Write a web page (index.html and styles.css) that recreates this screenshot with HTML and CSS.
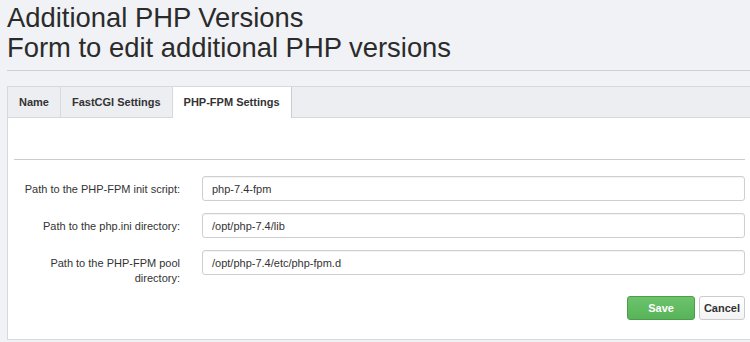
FILE: index.html
```html
<!DOCTYPE html>
<html lang="en">
<head>
    <meta charset="UTF-8">
    <title>Additional PHP Versions</title>
    <link rel="stylesheet" href="styles.css">
</head>
<body>
    <div class="page">
        <h1 class="page-title">Additional PHP Versions<br>Form to edit additional PHP versions</h1>
        <hr class="title-rule">

        <ul class="tab-bar">
            <li class="tab">Name</li>
            <li class="tab">FastCGI Settings</li>
            <li class="tab active">PHP-FPM Settings</li>
        </ul>

        <div class="tab-panel">
            <hr class="panel-rule">
            <form class="form-grid">
                <label class="form-label" for="init-script">Path to the PHP-FPM init script:</label>
                <input class="form-input" id="init-script" type="text" value="php-7.4-fpm">

                <label class="form-label" for="ini-dir">Path to the php.ini directory:</label>
                <input class="form-input" id="ini-dir" type="text" value="/opt/php-7.4/lib">

                <label class="form-label" for="pool-dir">Path to the PHP-FPM pool directory:</label>
                <input class="form-input" id="pool-dir" type="text" value="/opt/php-7.4/etc/php-fpm.d">
            </form>
            <div class="button-row">
                <button class="btn btn-save">Save</button>
                <button class="btn btn-cancel">Cancel</button>
            </div>
        </div>
    </div>
</body>
</html>
```

FILE: styles.css
```css
html, body {
    margin: 0;
    background-color: #f0f2f5;
    overflow: hidden;
    font-family: "Liberation Sans", Arial, sans-serif;
    color: #333;
}

.page {
    padding: 3px 0 0 7px;
    margin-right: -2px;
}

.page-title {
    margin: 0;
    font-size: 27.4px;
    font-weight: normal;
    line-height: 30px;
    color: #2b2b2b;
}

.title-rule {
    margin: 7px 0 0 0;
    border: none;
    border-top: 1px solid #cdd1d6;
}

/* tabs */
.tab-bar {
    display: flex;
    margin: 15px 0 0 0;
    padding: 0;
    list-style: none;
    height: 30px;
    background-color: #eceef1;
    border-top: 1px solid #d6d9dd;
    border-bottom: 1px solid #d6d9dd;
    border-left: 1px solid #d6d9dd;
}

.tab {
    padding: 0 11px;
    font-size: 11px;
    font-weight: bold;
    line-height: 30px;
    color: #333;
    border-right: 1px solid #d6d9dd;
}

.tab.active {
    background-color: #fff;
    height: 31px;
    margin-left: -1px;
    border-left: 1px solid #d6d9dd;
    border-right: 1px solid #c9ccd0;
}

.tab-panel {
    background-color: #fff;
    border-left: 1px solid #d6d9dd;
    border-bottom: 1px solid #d6d9dd;
    padding: 41px 7px 19px 6px;
}

.panel-rule {
    margin: 0 0 16px 0;
    border: none;
    border-top: 1px solid #cccccc;
}

/* form */
.form-grid {
    display: grid;
    grid-template-columns: 166px 1fr;
    column-gap: 22px;
    row-gap: 12px;
}

.form-label {
    padding-top: 6px;
    font-size: 11px;
    line-height: 15px;
    text-align: right;
    color: #333;
}

.form-input {
    box-sizing: border-box;
    height: 25px;
    padding: 0 9px;
    font-family: "Liberation Sans", Arial, sans-serif;
    font-size: 11px;
    color: #333;
    border: 1px solid #cfcfcf;
    border-radius: 3px;
    box-shadow: inset 0 1px 1px rgba(0, 0, 0, 0.05);
}

.button-row {
    display: flex;
    justify-content: flex-end;
    gap: 4px;
    margin-top: 10px;
}

.btn {
    height: 24px;
    font-family: "Liberation Sans", Arial, sans-serif;
    font-size: 11px;
    font-weight: bold;
    border-radius: 3px;
    cursor: pointer;
}

.btn-save {
    padding: 0 20px;
    min-width: 67px;
    color: #fff;
    background: linear-gradient(#6cc36c, #58b458);
    border: 1px solid #4a9e4a;
}

.btn-cancel {
    padding: 0 4px;
    color: #333;
    background: linear-gradient(#ffffff, #f3f3f3);
    border: 1px solid #ccc;
}
```
